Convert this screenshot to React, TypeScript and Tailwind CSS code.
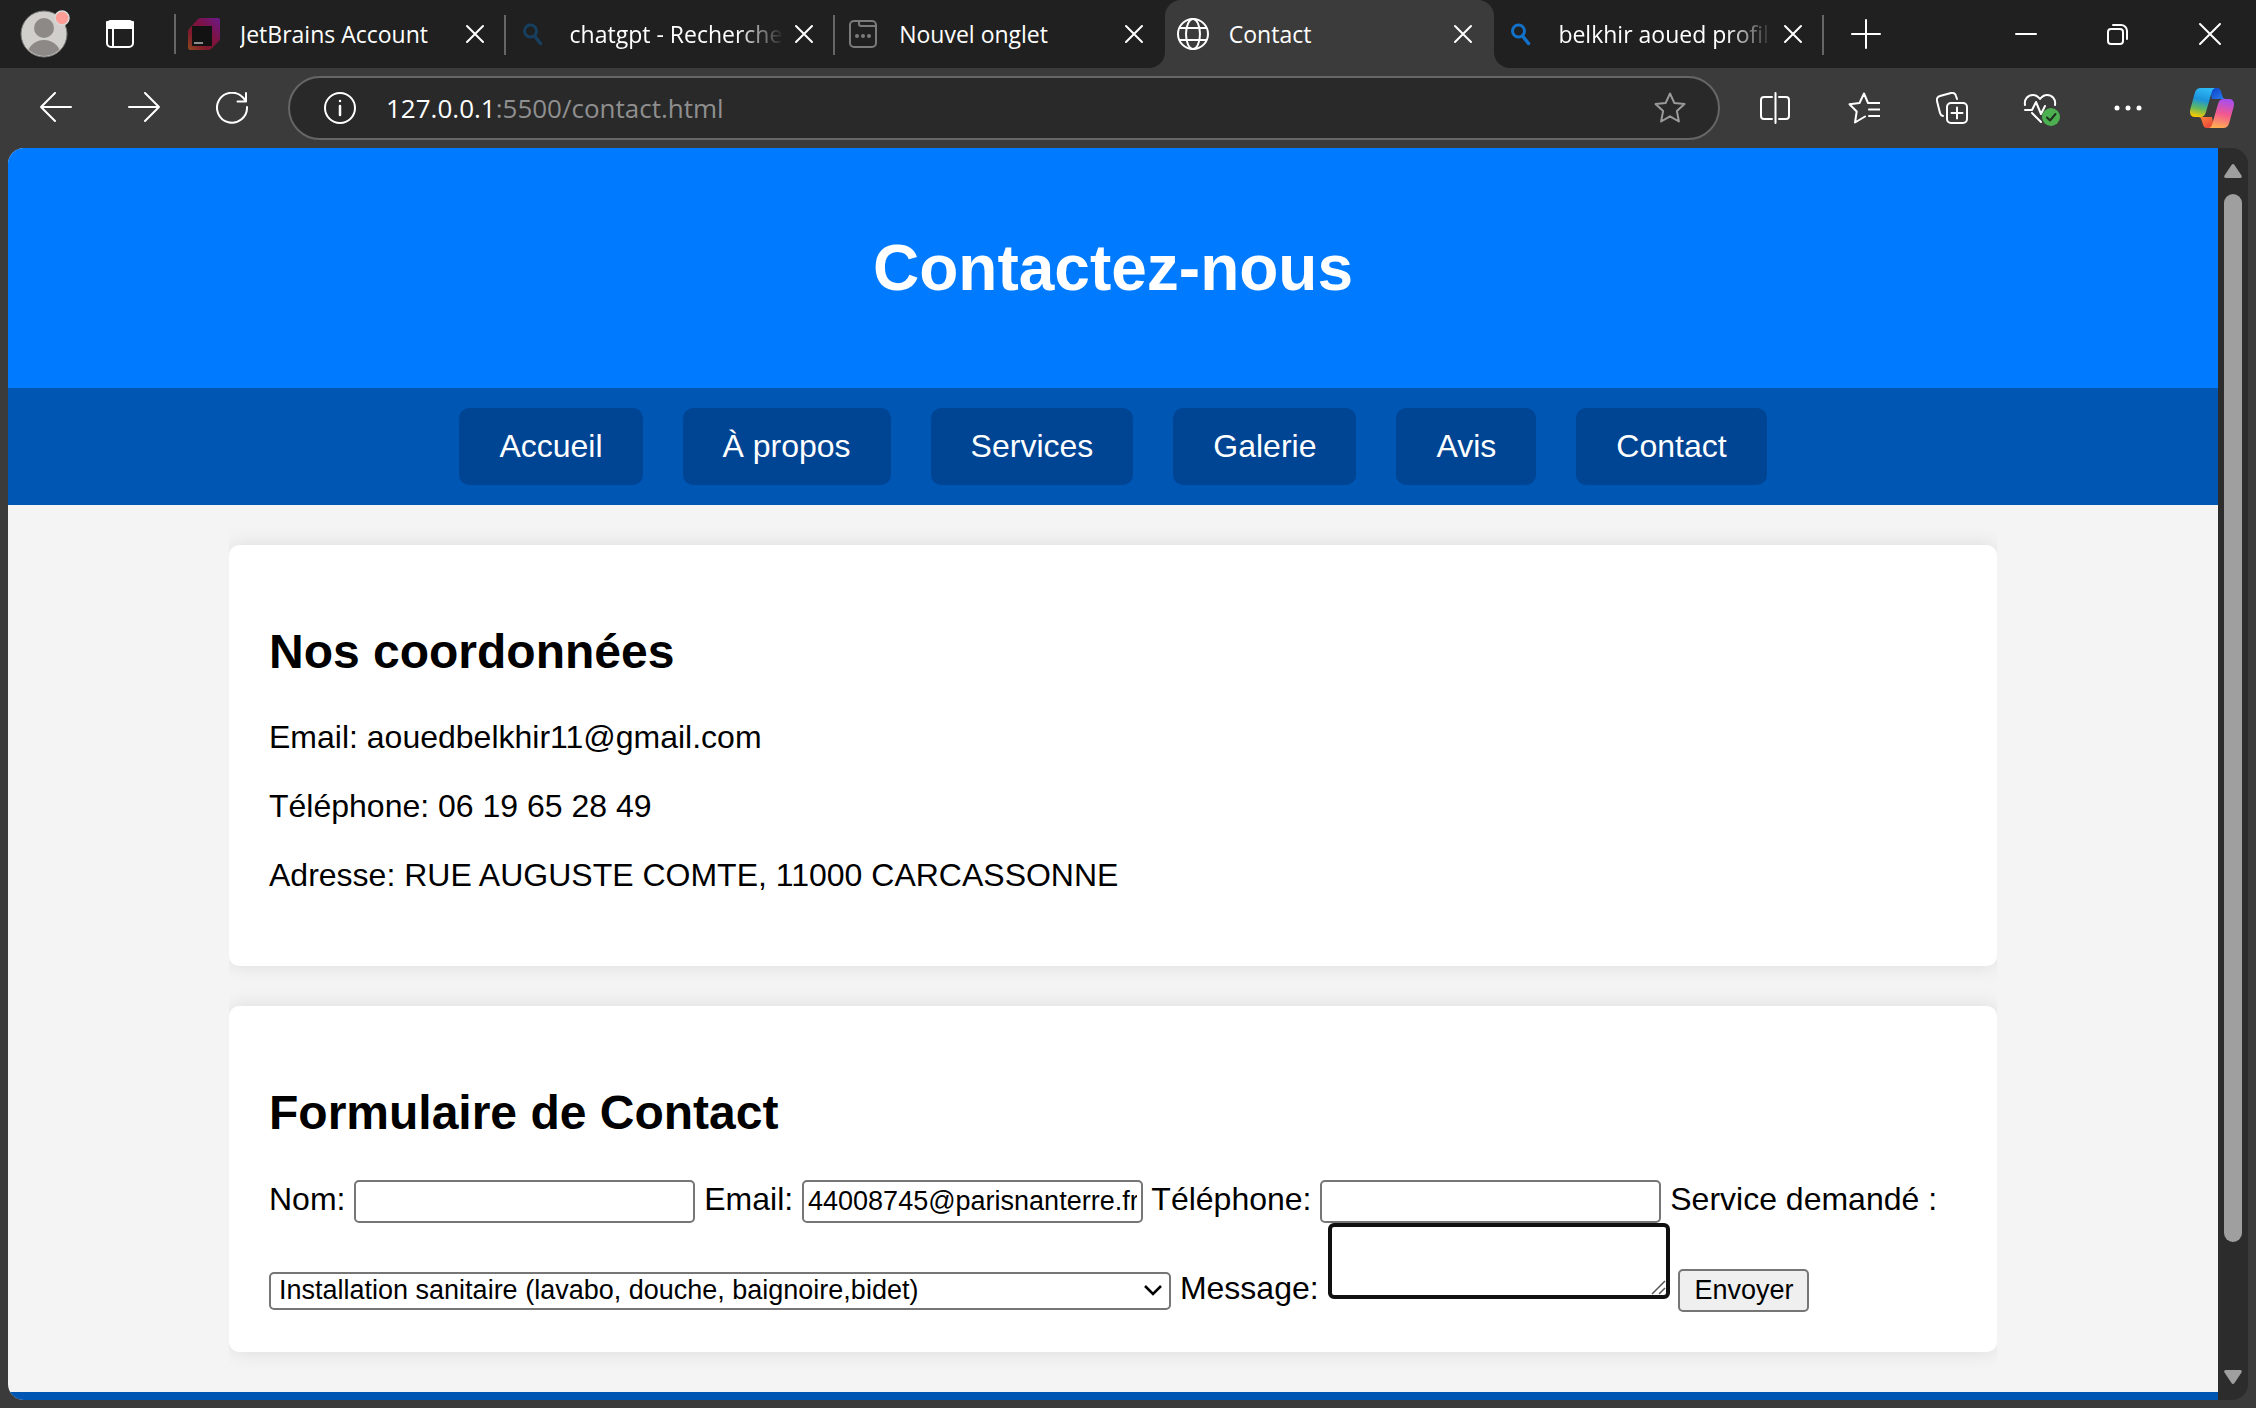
import React from "react";

type IconProps = { children: React.ReactNode; className?: string; box?: string };

function Icon({ children, className = "size-8", box = "0 0 32 32" }: IconProps) {
  return (
    <svg
      viewBox={box}
      className={`${className} shrink-0`}
      fill="none"
      stroke="currentColor"
      strokeWidth="2"
      strokeLinecap="round"
      strokeLinejoin="round"
      aria-hidden="true"
    >
      {children}
    </svg>
  );
}

function JetBrainsIcon() {
  return (
    <Icon>
      <defs>
        <linearGradient id="jb" x1="0" y1="1" x2="1" y2="0">
          <stop offset="0" stopColor="#8a4a1e" />
          <stop offset="0.3" stopColor="#801a2c" />
          <stop offset="0.6" stopColor="#7d1243" />
          <stop offset="1" stopColor="#6b1a8c" />
        </linearGradient>
      </defs>
      <path d="M13 0h17a2 2 0 0 1 2 2v18a4 4 0 0 1-1 3l-8 8a4 4 0 0 1-3 1H2a2 2 0 0 1-2-2V14a4 4 0 0 1 1-3L10 1a4 4 0 0 1 3-1z" fill="url(#jb)" stroke="none" />
      <path d="M4 8h20v20H4z" fill="#121212" stroke="none" />
      <path d="M6 24h9v2H6z" fill="#8c8c8c" stroke="none" />
    </Icon>
  );
}

function SearchIcon({ dim }: { dim?: boolean }) {
  return (
    <Icon className={dim ? "size-8 text-[#173f5f]" : "size-8 text-[#1272c9]"}>
      <circle cx="12.500" cy="13" r="6" strokeWidth="3" />
      <path d="M17 18.500l5.500 7" strokeWidth="3.500" />
    </Icon>
  );
}

function NewTabIcon() {
  return (
    <Icon className="size-8 text-[#7b7b7b]">
      <rect x="3" y="3" width="26" height="26" rx="4" />
      <path d="M12 3v3a2 2 0 0 0 2 2h15" />
      <g fill="currentColor" stroke="none">
        <circle cx="10" cy="18" r="2" />
        <circle cx="16" cy="18" r="2" />
        <circle cx="22" cy="18" r="2" />
      </g>
    </Icon>
  );
}

function GlobeIcon() {
  return (
    <Icon>
      <circle cx="16" cy="16" r="15" />
      <ellipse cx="16" cy="16" rx="7" ry="15" />
      <path d="M3 10h26M3 22h26" />
    </Icon>
  );
}

type Tab = { title: string; icon: React.ReactNode; active?: boolean; rule?: boolean; fade?: boolean };

const tabs: Tab[] = [
  { title: "JetBrains Account", icon: <JetBrainsIcon />, rule: true },
  { title: "chatgpt - Recherche", icon: <SearchIcon dim />, rule: true, fade: true },
  { title: "Nouvel onglet", icon: <NewTabIcon /> },
  { title: "Contact", icon: <GlobeIcon />, active: true },
  { title: "belkhir aoued profil", icon: <SearchIcon />, rule: true, fade: true },
];

function TabItem({ tab }: { tab: Tab }) {
  return (
    <div
      className={
        tab.active
          ? "relative flex h-[68px] min-w-0 flex-1 items-center rounded-t-2xl bg-[#3b3b3b] pr-[19px] pl-3"
          : "relative flex h-[68px] min-w-0 flex-1 items-center pr-[19px] pl-3"
      }
    >
      {tab.active && (
        <>
          <span className="absolute bottom-0 -left-4 size-4 bg-[#3b3b3b]">
            <span className="block size-4 rounded-br-2xl bg-[#202020]" />
          </span>
          <span className="absolute -right-4 bottom-0 size-4 bg-[#3b3b3b]">
            <span className="block size-4 rounded-bl-2xl bg-[#202020]" />
          </span>
        </>
      )}
      {tab.icon}
      <span
        className={
          tab.fade
            ? "ml-5 min-w-0 flex-1 overflow-hidden whitespace-nowrap mask-r-from-78% mask-r-to-100%"
            : "ml-5 min-w-0 flex-1 overflow-hidden whitespace-nowrap"
        }
      >
        {tab.title}
      </span>
      <button type="button" aria-label="Fermer l'onglet" className="ml-2">
        <Icon className="size-6" box="0 0 24 24">
          <path d="M4 4l16 16M20 4L4 20" />
        </Icon>
      </button>
      {tab.rule && <span className="absolute top-[15px] right-0 h-10 w-0.5 bg-[#666666]" />}
    </div>
  );
}

function TabBar() {
  return (
    <div className="flex h-[68px] items-center bg-[#202020] text-[23px] leading-8 text-white">
      <button type="button" aria-label="Profil" className="ml-5 size-12">
        <svg viewBox="0 0 48 48" className="size-12 overflow-visible" aria-hidden="true">
          <defs>
            <clipPath id="face">
              <circle cx="24" cy="24" r="22" />
            </clipPath>
          </defs>
          <circle cx="24" cy="24" r="23" fill="#d0cfcb" stroke="#777" strokeWidth="1" />
          <g clipPath="url(#face)" fill="#8d8986">
            <circle cx="24" cy="18" r="10" />
            <ellipse cx="24" cy="46" rx="17" ry="16" />
          </g>
          <circle cx="42" cy="8" r="7" fill="#ff9e96" stroke="#d9d9d9" strokeWidth="1.500" />
        </svg>
      </button>
      <button type="button" aria-label="Menu Actions des onglets" className="ml-9">
        <Icon>
          <rect x="3" y="3" width="26" height="26" rx="4" />
          <path d="M3 4h26v6H3zM9 10v19" fill="currentColor" />
        </Icon>
      </button>
      <span className="ml-[38px] h-10 w-0.5 bg-[#666666]" />
      <div className="flex min-w-0 max-w-[1648px] flex-1">
        {tabs.map((tab) => (
          <TabItem key={tab.title} tab={tab} />
        ))}
      </div>
      <button type="button" aria-label="Nouvel onglet" className="ml-[26px]">
        <Icon>
          <path d="M16 2v28M2 16h28" />
        </Icon>
      </button>
      <div className="ml-auto flex items-center gap-[60px] pr-[30px]">
        <button type="button" aria-label="Réduire">
          <Icon><path d="M6 16h20" /></Icon>
        </button>
        <button type="button" aria-label="Restaurer">
          <Icon>
            <rect x="6" y="11" width="15" height="15" rx="3" />
            <path d="M11 7h8a6 6 0 0 1 6 6v8" />
          </Icon>
        </button>
        <button type="button" aria-label="Fermer">
          <Icon><path d="M6 6l20 20M26 6L6 26" /></Icon>
        </button>
      </div>
    </div>
  );
}

const star = "M16 1.500l4.300 9.400 10.200 1.200-7.600 7 2 10.400-8.900-5.200-8.900 5.200 2-10.400-7.600-7 10.200-1.200z";

function CopilotIcon() {
  return (
    <svg viewBox="0 0 44 40" className="h-10 w-11 shrink-0" aria-hidden="true">
      <defs>
        <linearGradient id="cpA" x1="0.500" y1="0" x2="0.300" y2="1">
          <stop offset="0" stopColor="#2db8f5" />
          <stop offset="0.400" stopColor="#1c93dc" />
          <stop offset="0.700" stopColor="#5fb860" />
          <stop offset="1" stopColor="#ffc800" />
        </linearGradient>
        <linearGradient id="cpB" x1="0.600" y1="0" x2="0.400" y2="1">
          <stop offset="0" stopColor="#a64df0" />
          <stop offset="0.500" stopColor="#f2588f" />
          <stop offset="1" stopColor="#ffae50" />
        </linearGradient>
        <linearGradient id="cpC" x1="0" y1="0" x2="1" y2="1">
          <stop offset="0" stopColor="#0b3fc4" />
          <stop offset="1" stopColor="#2a7ff0" />
        </linearGradient>
        <linearGradient id="cpD" x1="0" y1="0" x2="1" y2="1">
          <stop offset="0" stopColor="#ff8a3c" />
          <stop offset="1" stopColor="#e53a3a" />
        </linearGradient>
      </defs>
      <path d="M20 0h7c2.500 0 3.500 1.500 4.200 4l1.400 4.500c.6 1.800 1.400 2.500 3.400 2.500H22z" fill="url(#cpC)" />
      <path d="M24 40h-7c-2.500 0-3.500-1.500-4.200-4l-1.400-4.500C10.800 29.700 10 29 8 29h14z" fill="url(#cpD)" />
      <path d="M11 0h15c-2.500 0-3.500 1.500-4.400 4.500L16 24c-1 3.500-2.500 5-5.500 5H5c-4.500 0-5.800-3.500-4.600-8L4.800 5C5.800 1.500 7.500 0 11 0z" fill="url(#cpA)" />
      <path d="M33 40H18c2.500 0 3.500-1.500 4.400-4.500L28 16c1-3.500 2.500-5 5.500-5H39c4.500 0 5.800 3.500 4.600 8l-4.400 16c-1 3.500-2.700 5-6.200 5z" fill="url(#cpB)" />
    </svg>
  );
}

function Toolbar() {
  return (
    <div className="flex h-20 items-center bg-[#3b3b3b] pr-[22px] pl-10 text-white">
      <div className="flex items-center gap-14">
        <button type="button" aria-label="Précédent">
          <Icon><path d="M31 15H1M15 1L1 15l14 14" /></Icon>
        </button>
        <button type="button" aria-label="Suivant">
          <Icon><path d="M1 15h30M17 1l14 14-14 14" /></Icon>
        </button>
        <button type="button" aria-label="Actualiser">
          <Icon>
            <path d="M31 15A15 15 0 1 1 27 5.500L30 9M30 1v8.500h-8.500" />
          </Icon>
        </button>
      </div>
      <div className="ml-10 flex h-16 min-w-0 flex-1 items-center rounded-full border-2 border-[#666666] bg-[#292929] pr-8 pl-[34px]">
        <Icon>
          <circle cx="16" cy="16" r="15" />
          <path d="M16 14v9M16 9v.1" strokeWidth="2.500" />
        </Icon>
        <p className="ml-[30px] flex-1 text-[26px] leading-9 text-[#8f8f8f]">
          <span className="text-white">127.0.0.1</span>:5500/contact.html
        </p>
        <button type="button" aria-label="Ajouter aux favoris" className="text-[#9b9b9b]">
          <Icon><path d={star} /></Icon>
        </button>
      </div>
      <div className="ml-10 flex items-center gap-14">
        <button type="button" aria-label="Écran partagé">
          <Icon>
            <path d="M12 5H4a3 3 0 0 0-3 3v16a3 3 0 0 0 3 3h8M19 5h7a3 3 0 0 1 3 3v16a3 3 0 0 1-3 3h-7M15.500 1v30" />
          </Icon>
        </button>
        <button type="button" aria-label="Favoris">
          <Icon>
            <path d="M20 11L16 1.500 11.500 11l-10 1.200 7.200 7.300L7 30.500l10-6M21 11h11M21 17.500h11M21 24h11" />
          </Icon>
        </button>
        <button type="button" aria-label="Collections">
          <Icon>
            <rect x="11" y="11" width="20" height="20" rx="4" />
            <path d="M21 15.500v11M15.500 21h11M21 7l-1-3a4 4 0 0 0-5-3L4 4a4 4 0 0 0-3 5l3 12a4 4 0 0 0 3 3" />
          </Icon>
        </button>
        <button type="button" aria-label="Éléments essentiels du navigateur">
          <Icon className="size-8 overflow-visible">
            <path d="M1 13C0 7 4 3 9 3c3 0 5 1.500 7 4 2-2.500 4-4 7-4 5 0 9 4 8 10M1 18h7l4-8 5 12 4-8M8 21l9 9" />
            <circle cx="27" cy="25" r="9" fill="#4caf50" stroke="none" />
            <path d="M23 25.500l3 3 5.500-6.500" stroke="#20301f" />
          </Icon>
        </button>
        <button type="button" aria-label="Paramètres et plus">
          <Icon>
            <g fill="currentColor" stroke="none">
              <circle cx="5" cy="16" r="2.500" />
              <circle cx="16" cy="16" r="2.500" />
              <circle cx="27" cy="16" r="2.500" />
            </g>
          </Icon>
        </button>
      </div>
      <button type="button" aria-label="Copilot" className="ml-[46px]">
        <CopilotIcon />
      </button>
    </div>
  );
}

const links = ["Accueil", "À propos", "Services", "Galerie", "Avis", "Contact"];
const card = "mt-10 rounded-[10px] bg-white p-10 shadow-[0_0_20px_rgba(0,0,0,0.1)]";
const heading = "my-10 text-[48px] leading-[54px] font-bold";
const field = "h-[43px] w-[341px] rounded-[5px] border-2 border-[#767676] bg-white px-1 text-[27px] leading-[31px] text-black";

function ContactForm() {
  return (
    <form onSubmit={(e) => e.preventDefault()}>
      <label htmlFor="nom">Nom:</label> <input id="nom" type="text" className={field} />{" "}
      <label htmlFor="email">Email:</label>{" "}
      <input id="email" type="email" defaultValue="44008745@parisnanterre.fr" className={field} />{" "}
      <label htmlFor="tel">Téléphone:</label> <input id="tel" type="tel" className={field} />{" "}
      <label htmlFor="service">Service demandé :</label>{" "}
      <span className="relative inline-block">
        <select
          id="service"
          className="h-[38px] w-[902px] appearance-none rounded-[5px] border-2 border-[#767676] bg-white px-2 text-[27px] leading-[31px] text-black"
        >
          <option>Installation sanitaire (lavabo, douche, baignoire,bidet)</option>
        </select>
        <svg viewBox="0 0 20 20" className="pointer-events-none absolute top-2.5 right-2 size-5" fill="none" stroke="#000" strokeWidth="2.500" aria-hidden="true">
          <path d="M2 6l8 8 8-8" />
        </svg>
      </span>{" "}
      <label htmlFor="message">Message:</label>{" "}
      <span className="relative inline-block">
        <textarea
          id="message"
          className="block h-[76px] w-[342px] resize-none rounded-[6px] border-4 border-[#101010] bg-white p-1 text-[27px] leading-[31px]"
        />
        <svg viewBox="0 0 16 16" className="pointer-events-none absolute right-1 bottom-1 size-4" stroke="#555" strokeWidth="1.500" aria-hidden="true">
          <path d="M2 15L15 2M9 15l6-6" />
        </svg>
      </span>{" "}
      <button type="submit" className="h-[43px] rounded-[5px] border-2 border-[#767676] bg-[#efefef] px-3.5 text-[27px] leading-[31px] text-black">
        Envoyer
      </button>
    </form>
  );
}

function ContactPage() {
  return (
    <div className="flex min-w-0 flex-1 flex-col overflow-hidden rounded-l-2xl bg-[#f4f4f4] font-['Liberation_Sans',Arial,sans-serif] text-[32px] leading-[37px] text-black">
      <header className="bg-[#007bff] p-10 text-center text-white">
        <h1 className="my-[43px] text-[64px] leading-[74px] font-bold">Contactez-nous</h1>
      </header>
      <nav className="flex flex-wrap justify-center gap-10 bg-[#0056b3] p-5 text-white">
        {links.map((label) => (
          <a key={label} href="#" className="rounded-[10px] bg-[#004494] px-10 py-5">
            {label}
          </a>
        ))}
      </nav>
      <main className="mx-auto w-4/5 overflow-hidden pb-10">
        <section className={card}>
          <h2 className={heading}>Nos coordonnées</h2>
          <p className="my-8">Email: aouedbelkhir11@gmail.com</p>
          <p className="my-8">Téléphone: 06 19 65 28 49</p>
          <p className="my-8">Adresse: RUE AUGUSTE COMTE, 11000 CARCASSONNE</p>
        </section>
        <section className={card}>
          <h2 className={heading}>Formulaire de Contact</h2>
          <ContactForm />
        </section>
      </main>
      <footer className="min-h-1 flex-1 bg-[#0056b3]" />
    </div>
  );
}

function ScrollBar() {
  return (
    <div className="flex w-[30px] shrink-0 flex-col items-center rounded-r-2xl bg-[#2c2c2c] py-4">
      <svg viewBox="0 0 18 14" className="h-3.5 w-[18px]" fill="#9f9f9f" aria-hidden="true">
        <path d="M7.500 1Q9-1 10.500 1L17.500 11.500Q18.500 14 16 14H2Q-.5 14 .5 11.500z" />
      </svg>
      <div className="mt-4 flex w-[18px] flex-1 flex-col">
        <div className="w-[18px] grow-[1048] rounded-full bg-[#9f9f9f]" />
        <div className="grow-[128]" />
      </div>
      <svg viewBox="0 0 18 14" className="h-3.5 w-[18px]" fill="#9f9f9f" aria-hidden="true">
        <path d="M7.500 13Q9 15 10.500 13L17.500 2.500Q18.500 0 16 0H2Q-.5 0 .5 2.500z" />
      </svg>
    </div>
  );
}

export default function App() {
  return (
    <div className="flex min-h-screen flex-col bg-[#3b3b3b] font-['Open_Sans','Noto_Sans',sans-serif]">
      <TabBar />
      <Toolbar />
      <div className="flex flex-1 px-2 pb-2">
        <ContactPage />
        <ScrollBar />
      </div>
    </div>
  );
}
